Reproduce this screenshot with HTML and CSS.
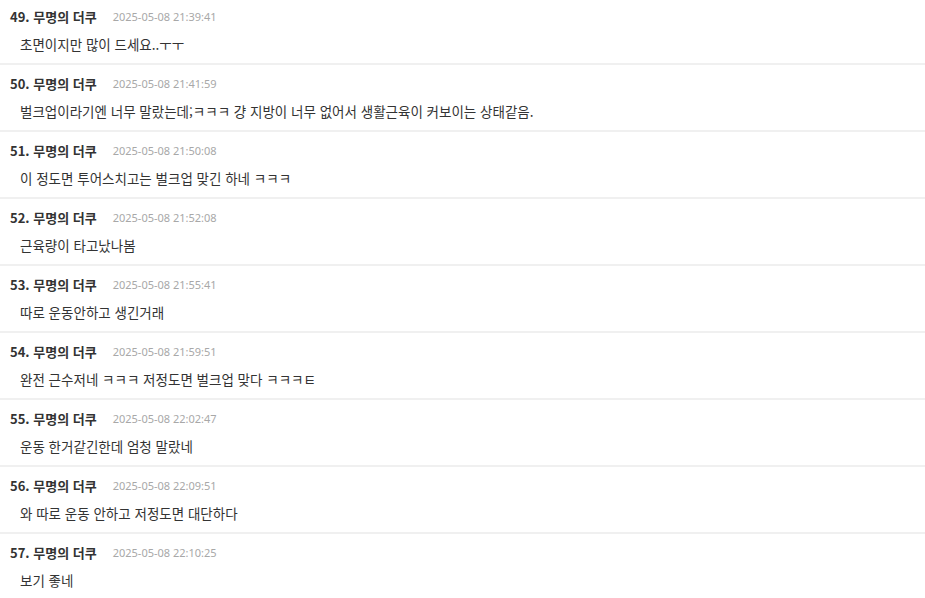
FILE: index.html
```html
<!DOCTYPE html>
<html lang="ko">
<head>
<meta charset="utf-8">
<link rel="stylesheet" href="styles.css">
</head>
<body>
<ul class="comments">
  <li class="comment"><div class="meta"><span class="name">49. 무명의 더쿠</span><span class="date">2025-05-08 21:39:41</span></div><p class="text">초면이지만 많이 드세요..ㅜㅜ</p></li>
  <li class="comment"><div class="meta"><span class="name">50. 무명의 더쿠</span><span class="date">2025-05-08 21:41:59</span></div><p class="text">벌크업이라기엔 너무 말랐는데;ㅋㅋㅋ 걍 지방이 너무 없어서 생활근육이 커보이는 상태같음.</p></li>
  <li class="comment"><div class="meta"><span class="name">51. 무명의 더쿠</span><span class="date">2025-05-08 21:50:08</span></div><p class="text">이 정도면 투어스치고는 벌크업 맞긴 하네 ㅋㅋㅋ</p></li>
  <li class="comment"><div class="meta"><span class="name">52. 무명의 더쿠</span><span class="date">2025-05-08 21:52:08</span></div><p class="text">근육량이 타고났나봄</p></li>
  <li class="comment"><div class="meta"><span class="name">53. 무명의 더쿠</span><span class="date">2025-05-08 21:55:41</span></div><p class="text">따로 운동안하고 생긴거래</p></li>
  <li class="comment"><div class="meta"><span class="name">54. 무명의 더쿠</span><span class="date">2025-05-08 21:59:51</span></div><p class="text">완전 근수저네 ㅋㅋㅋ 저정도면 벌크업 맞다 ㅋㅋㅋㅌ</p></li>
  <li class="comment"><div class="meta"><span class="name">55. 무명의 더쿠</span><span class="date">2025-05-08 22:02:47</span></div><p class="text">운동 한거같긴한데 엄청 말랐네</p></li>
  <li class="comment"><div class="meta"><span class="name">56. 무명의 더쿠</span><span class="date">2025-05-08 22:09:51</span></div><p class="text">와 따로 운동 안하고 저정도면 대단하다</p></li>
  <li class="comment"><div class="meta"><span class="name">57. 무명의 더쿠</span><span class="date">2025-05-08 22:10:25</span></div><p class="text">보기 좋네</p></li>
</ul>
</body>
</html>
```
FILE: styles.css
```css
html, body {
  margin: 0;
  padding: 0;
  background: #fff;
  overflow: hidden;
}
body {
  font-family: "Noto Sans CJK KR", "Noto Sans", sans-serif;
  color: #333;
}
.comments {
  list-style: none;
  margin: -2px 0 0 0;
  padding: 0;
}
.comment {
  border-bottom: 2px solid #f0f0f0;
  padding: 9px 10px 8px 10px;
  box-sizing: border-box;
  height: 67px;
}
.meta {
  display: flex;
  align-items: center;
  gap: 16px;
  height: 18px;
}
.name {
  font-size: 13px;
  font-weight: 700;
  color: #333;
}
.date {
  font-family: "Noto Sans", "Open Sans", sans-serif;
  font-size: 11px;
  color: #a8a8a8;
}
.text {
  margin: 9px 0 0 10px;
  font-size: 13.5px;
  line-height: 20px;
  color: #333;
}
```
